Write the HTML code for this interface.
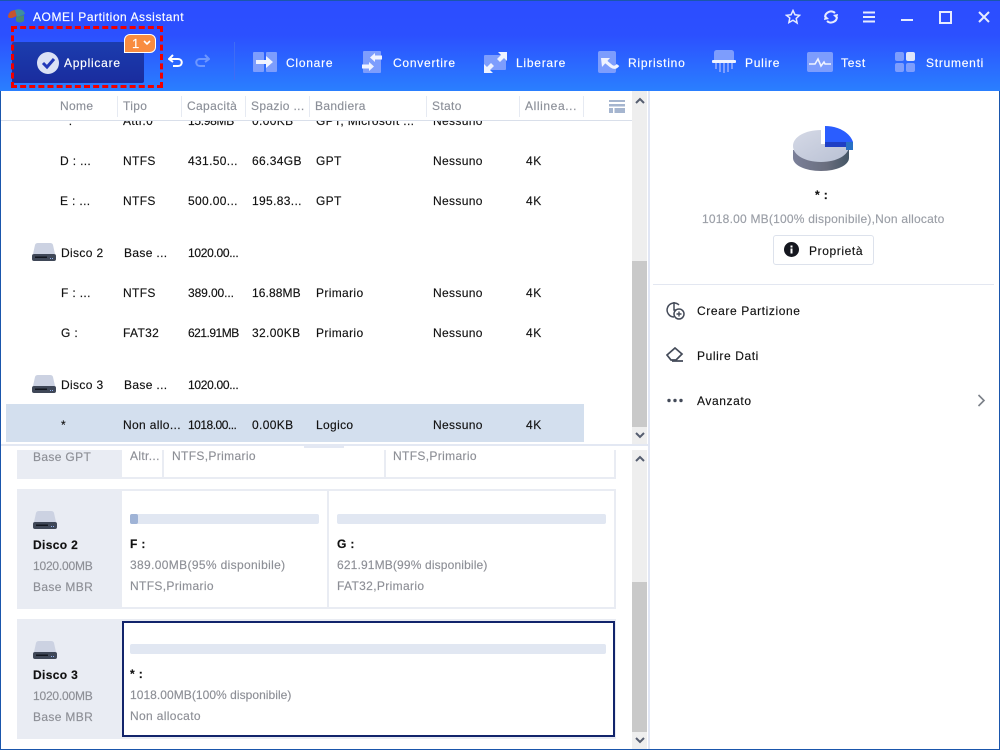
<!DOCTYPE html>
<html><head><meta charset="utf-8"><style>
html,body{margin:0;padding:0;background:#fff}
#r{position:relative;width:1000px;height:750px;overflow:hidden;background:#fff;font:12px "Liberation Sans",sans-serif;color:#111}
#r div,#r svg{position:absolute}
.t{white-space:nowrap;line-height:16px;height:16px;letter-spacing:.35px;-webkit-text-stroke:.15px currentColor}
.w{color:#fff;letter-spacing:.75px}
.h{color:#8b8f98;top:98px}
.g{color:#8d8f96}
.n{letter-spacing:-.3px}
.p{letter-spacing:.6px}
.sep{width:1px;top:96px;height:21px;background:#e6eaf2}
.b{font-weight:bold}
</style></head><body><div id="r">
<div style="left:0;top:0;width:1000px;height:91px;background:linear-gradient(#2c4dff 0,#2c50ff 35px,#2a7fff 91px)"></div>
<div style="left:0;top:0;width:1000px;height:1px;background:#1a56ac"></div>

<svg style="left:7px;top:8px" width="20" height="16" viewBox="0 0 20 16"><path d="M1 9C1 4 5 2 9 2l1 6-5 2H2z" fill="#c4552f"/><path d="M8 2c5-2 9 0 10 4l-8 3z" fill="#3f8f9f"/><path d="M9 9l8-2v6c-2 2-6 2-8 0z" fill="#4b8a72"/></svg>
<div class="t w" style="left:33px;top:9px;letter-spacing:.55px">AOMEI Partition Assistant</div>

<div style="left:12px;top:42px;width:132px;height:41px;background:linear-gradient(#1b3dae,#1a2c9e);border-radius:2px"></div>
<div style="left:11px;top:26px;width:146px;height:56px;border:3px dashed #f00000"></div>
<svg style="left:37px;top:52px" width="22" height="22" viewBox="0 0 22 22"><circle cx="11" cy="11" r="11" fill="#dbe1f5"/><path d="M6 11l4 4 7-8" fill="none" stroke="#2238b8" stroke-width="3"/></svg>
<div class="t w" style="left:64px;top:55px">Applicare</div>
<div style="left:124px;top:34px;width:32px;height:19px;background:#f98c40;border:1px solid #fff;border-radius:6px 6px 6px 0;box-sizing:border-box"></div>
<div class="t w" style="left:132px;top:36px;font-size:13px">1</div>
<svg style="left:143px;top:40px" width="8" height="6"><path d="M1 1l3 3 3-3" fill="none" stroke="#fff" stroke-width="1.600"/></svg>

<svg style="left:168px;top:54px" width="16" height="14"><path d="M5 1L1 5l4 3M1 5h9c5 0 5 7 0 7H5" fill="none" stroke="#fff" stroke-width="2"/></svg>
<svg style="left:194px;top:54px" width="16" height="14"><path d="M11 1l4 4-4 3M15 5H6c-5 0-5 7 0 7h5" fill="none" stroke="#6d97ff" stroke-width="2"/></svg>
<div style="left:234px;top:42px;width:1px;height:38px;background:#3f6cf5"></div>

<!-- toolbar -->
<svg style="left:253px;top:51px" width="24" height="22"><rect width="11" height="20" y="1" rx="1" fill="#7d9dfd"/><rect x="13" y="1" width="11" height="20" rx="1" fill="#7d9dfd"/><path d="M3 9h10V5l7 6-7 6v-4H3z" fill="#f0f3ff"/></svg>
<div class="t w" style="left:286px;top:55px">Clonare</div>
<svg style="left:362px;top:51px" width="22" height="22"><rect x="1" width="18" height="22" rx="1" fill="#7d9dfd"/><path d="M20 4.500h-7V2L8 6.500l5 4.500V8.500h7zM0 13.500h7V11l5 4.500L7 20v-2.500H0z" fill="#f0f3ff"/></svg>
<div class="t w" style="left:393px;top:55px">Convertire</div>
<svg style="left:484px;top:52px" width="23" height="21"><rect y="3" width="22" height="15" rx="1" fill="#7d9dfd"/><path d="M14 0h9v9l-3-3-4 4-3-3 4-4zM9 21H0v-9l3 3 4-4 3 3-4 4z" fill="#eef2ff"/></svg>
<div class="t w" style="left:516px;top:55px">Liberare</div>
<svg style="left:598px;top:51px" width="24" height="22"><rect width="18" height="22" rx="2" fill="#7d9dfd"/><path d="M3 7h9L4 16z" fill="#f0f3ff"/><path d="M7 10l6 5q4 3 7-1" fill="none" stroke="#f0f3ff" stroke-width="3.200"/></svg>
<div class="t w" style="left:628px;top:55px">Ripristino</div>
<svg style="left:712px;top:50px" width="24" height="24"><path d="M2 3c0-2 1-3 3-3h14c2 0 3 1 3 3v7H2z" fill="#7d9dfd"/><rect y="10" width="24" height="3" rx="1" fill="#f0f3ff"/><path d="M3 13h2v6H3zM7 13h2v9H7zM11 13h2v10h-2zM15 13h2v9h-2zM19 13h2v6h-2z" fill="#7d9dfd"/></svg>
<div class="t w" style="left:745px;top:55px">Pulire</div>
<svg style="left:807px;top:52px" width="26" height="20"><rect width="26" height="20" rx="2" fill="#7d9dfd"/><path d="M2 12h6l3-5 3 7 3-4 1 2h6" fill="none" stroke="#f0f3ff" stroke-width="1.600"/></svg>
<div class="t w" style="left:841px;top:55px">Test</div>
<svg style="left:895px;top:52px" width="20" height="20"><rect width="9" height="9" rx="2" fill="#7d9dfd"/><rect x="11" width="9" height="9" rx="2" fill="#dfe5fa"/><rect y="11" width="9" height="9" rx="2" fill="#7d9dfd"/><rect x="11" y="11" width="9" height="9" rx="2" fill="#7d9dfd"/></svg>
<div class="t w" style="left:926px;top:55px">Strumenti</div>

<!-- window buttons -->
<svg style="left:785px;top:9px" width="16" height="16"><path d="M8 1.500l2 4.300 4.600.5-3.400 3.100.9 4.600L8 11.200 3.900 13.500l.9-4.600L1.400 6.300 6 5.800z" fill="none" stroke="#e6ebff" stroke-width="1.500"/></svg>
<svg style="left:823px;top:9px" width="16" height="16"><path d="M2 8a6 6 0 0 1 10-4M14 8a6 6 0 0 1-10 4" fill="none" stroke="#e6ebff" stroke-width="2"/><path d="M10 6l5-1-1 5zM6 10l-5 1 1-5z" fill="#e6ebff"/></svg>
<svg style="left:863px;top:11px" width="12" height="12"><path d="M0 1.500h12M0 6h12M0 10.500h12" stroke="#e6ebff" stroke-width="2"/></svg>
<div style="left:901px;top:19px;width:12px;height:2px;background:#e6ebff"></div>
<div style="left:939px;top:11px;border:2px solid #e6ebff;width:9px;height:9px"></div>
<svg style="left:978px;top:11px" width="12" height="12"><path d="M1 1l10 10M11 1L1 11" stroke="#e6ebff" stroke-width="2"/></svg>

<!-- window border -->
<div style="left:0;top:91px;width:1px;height:659px;background:#1a56ac"></div>
<div style="left:999px;top:91px;width:1px;height:659px;background:#1a56ac"></div>
<div style="left:0;top:749px;width:1000px;height:1px;background:#1a56ac"></div>

<!-- table body, clipped -->
<div style="left:1px;top:121px;width:631px;height:323px;overflow:hidden">
 <div class="t" style="left:59px;top:-8px">*  :</div><div class="t" style="left:122px;top:-8px">Attr.0</div><div class="t n" style="left:187px;top:-8px">15.98MB</div><div class="t" style="left:251px;top:-8px">0.00KB</div><div class="t" style="left:315px;top:-8px">GPT, Microsoft ...</div><div class="t" style="left:432px;top:-8px">Nessuno</div>
</div>
<div class="t h" style="left:60px">Nome</div><div class="t h" style="left:123px">Tipo</div><div class="t h" style="left:187px">Capacità</div><div class="t h" style="left:251px">Spazio ...</div><div class="t h" style="left:315px">Bandiera</div><div class="t h" style="left:432px">Stato</div><div class="t h" style="left:525px;letter-spacing:.6px">Allinea...</div>
<div class="sep" style="left:117px"></div><div class="sep" style="left:181px"></div><div class="sep" style="left:245px"></div><div class="sep" style="left:309px"></div><div class="sep" style="left:426px"></div><div class="sep" style="left:519px"></div><div class="sep" style="left:583px"></div>
<div style="left:1px;top:120px;width:631px;height:1px;background:#d9dfea"></div>
<svg style="left:609px;top:100px" width="16" height="13"><path d="M0 0h16v2H0zM0 4h16v2.500H0zM0 8h4v5H0zM5.500 8H16v5H5.500z" fill="#a5b5cf"/></svg>

<div style="left:6px;top:404px;width:578px;height:38px;background:#d3dfee"></div>

<div class="t" style="left:60px;top:153px">D : ...</div><div class="t" style="left:123px;top:153px">NTFS</div><div class="t" style="left:188px;top:153px">431.50...</div><div class="t" style="left:252px;top:153px">66.34GB</div><div class="t" style="left:316px;top:153px">GPT</div><div class="t" style="left:433px;top:153px">Nessuno</div><div class="t p" style="left:526px;top:153px">4K</div>
<div class="t" style="left:60px;top:193px">E : ...</div><div class="t" style="left:123px;top:193px">NTFS</div><div class="t" style="left:188px;top:193px">500.00...</div><div class="t" style="left:252px;top:193px">195.83...</div><div class="t" style="left:316px;top:193px">GPT</div><div class="t" style="left:433px;top:193px">Nessuno</div><div class="t p" style="left:526px;top:193px">4K</div>

<svg style="left:32px;top:243px" width="24" height="18"><path d="M1 11L3 2Q3.500 0 6 0h12q2.500 0 3 2L23 11z" fill="#ccd2e2"/><path d="M0 13q0-2 2-2h20q2 0 2 2v3q0 2-2 2H2q-2 0-2-2z" fill="#3f4757"/><path d="M3 13.500h12v1.500H3z" fill="#12161f"/><path d="M18 15h1v1h-1zM20 15h1v1h-1z" fill="#8fb0ef"/></svg>
<div class="t" style="left:61px;top:245px">Disco 2</div><div class="t" style="left:124px;top:245px">Base ...</div><div class="t n" style="left:188px;top:245px">1020.00...</div>
<div class="t" style="left:61px;top:285px">F : ...</div><div class="t" style="left:123px;top:285px">NTFS</div><div class="t n" style="left:188px;top:285px;letter-spacing:-.1px">389.00...</div><div class="t" style="left:252px;top:285px;letter-spacing:.1px">16.88MB</div><div class="t" style="left:316px;top:285px">Primario</div><div class="t" style="left:433px;top:285px">Nessuno</div><div class="t p" style="left:526px;top:285px">4K</div>
<div class="t" style="left:61px;top:325px">G :</div><div class="t" style="left:123px;top:325px">FAT32</div><div class="t n" style="left:188px;top:325px;letter-spacing:-.5px">621.91MB</div><div class="t" style="left:252px;top:325px">32.00KB</div><div class="t" style="left:316px;top:325px">Primario</div><div class="t" style="left:433px;top:325px">Nessuno</div><div class="t p" style="left:526px;top:325px">4K</div>
<svg style="left:32px;top:375px" width="24" height="18"><path d="M1 11L3 2Q3.500 0 6 0h12q2.500 0 3 2L23 11z" fill="#ccd2e2"/><path d="M0 13q0-2 2-2h20q2 0 2 2v3q0 2-2 2H2q-2 0-2-2z" fill="#3f4757"/><path d="M3 13.500h12v1.500H3z" fill="#12161f"/><path d="M18 15h1v1h-1zM20 15h1v1h-1z" fill="#8fb0ef"/></svg>
<div class="t" style="left:61px;top:377px">Disco 3</div><div class="t" style="left:124px;top:377px">Base ...</div><div class="t n" style="left:188px;top:377px">1020.00...</div>
<div class="t" style="left:61px;top:417px">*</div><div class="t" style="left:123px;top:417px">Non allo...</div><div class="t n" style="left:188px;top:417px;letter-spacing:-.5px">1018.00...</div><div class="t" style="left:252px;top:417px">0.00KB</div><div class="t" style="left:316px;top:417px">Logico</div><div class="t" style="left:433px;top:417px">Nessuno</div><div class="t p" style="left:526px;top:417px">4K</div>

<!-- splitter -->
<div style="left:1px;top:444px;width:647px;height:2px;background:#e3e8f3"></div>
<div style="left:304px;top:446px;width:40px;height:2px;background:#e3e8f3"></div>

<!-- scrollbars -->
<div style="left:632px;top:91px;width:15px;height:353px;background:#eee"></div>
<div style="left:632px;top:261px;width:15px;height:166px;background:#c9c9c9"></div>
<svg style="left:635px;top:97px" width="10" height="7"><path d="M1 6l4-4 4 4" fill="none" stroke="#565e70" stroke-width="2"/></svg>
<svg style="left:635px;top:432px" width="10" height="7"><path d="M1 1l4 4 4-4" fill="none" stroke="#565e70" stroke-width="2"/></svg>
<div style="left:632px;top:450px;width:15px;height:299px;background:#eee"></div>
<div style="left:632px;top:582px;width:15px;height:150px;background:#c9c9c9"></div>
<svg style="left:635px;top:455px" width="10" height="7"><path d="M1 6l4-4 4 4" fill="none" stroke="#565e70" stroke-width="2"/></svg>
<svg style="left:635px;top:737px" width="10" height="7"><path d="M1 1l4 4 4-4" fill="none" stroke="#565e70" stroke-width="2"/></svg>
<div style="left:648px;top:91px;width:2px;height:658px;background:#e1e6f4"></div>

<!-- disk 1 clipped -->
<div style="left:17px;top:450px;width:105px;height:29px;background:#e9ecf3"></div>
<div style="left:122px;top:477px;width:494px;height:2px;background:#e9ecf3"></div>
<div style="left:162px;top:450px;width:2px;height:29px;background:#e9ecf3"></div>
<div style="left:384px;top:450px;width:2px;height:29px;background:#e9ecf3"></div>
<div style="left:614px;top:450px;width:2px;height:29px;background:#e9ecf3"></div>
<div class="t g" style="left:33px;top:449px">Base GPT</div><div class="t g" style="left:130px;top:448px">Altr...</div><div class="t g" style="left:172px;top:448px">NTFS,Primario</div><div class="t g" style="left:393px;top:448px">NTFS,Primario</div>

<!-- disk 2 -->
<div style="left:17px;top:489px;width:599px;height:120px;background:#e9ecf3"></div>
<div style="left:122px;top:491px;width:205px;height:116px;background:#fff"></div>
<div style="left:329px;top:491px;width:285px;height:116px;background:#fff"></div>
<svg style="left:33px;top:511px" width="24" height="18"><path d="M1 11L3 2Q3.500 0 6 0h12q2.500 0 3 2L23 11z" fill="#ccd2e2"/><path d="M0 13q0-2 2-2h20q2 0 2 2v3q0 2-2 2H2q-2 0-2-2z" fill="#3f4757"/><path d="M3 13.500h12v1.500H3z" fill="#12161f"/><path d="M18 15h1v1h-1zM20 15h1v1h-1z" fill="#8fb0ef"/></svg>
<div class="t b" style="left:33px;top:537px">Disco 2</div>
<div class="t g n" style="left:33px;top:558px;letter-spacing:-.2px">1020.00MB</div>
<div class="t g" style="left:33px;top:579px">Base MBR</div>
<div style="left:130px;top:514px;width:189px;height:10px;background:#e1e7f2;border-radius:2px"></div>
<div style="left:130px;top:514px;width:8px;height:10px;background:#9fb3d6;border-radius:2px"></div>
<div class="t b" style="left:130px;top:536px">F :</div>
<div class="t g" style="left:130px;top:557px">389.00MB(95% disponibile)</div>
<div class="t g" style="left:130px;top:578px">NTFS,Primario</div>
<div style="left:337px;top:514px;width:269px;height:10px;background:#e1e7f2;border-radius:2px"></div>
<div class="t b" style="left:337px;top:536px">G :</div>
<div class="t g" style="left:337px;top:557px;letter-spacing:.15px">621.91MB(99% disponibile)</div>
<div class="t g" style="left:337px;top:578px">FAT32,Primario</div>

<!-- disk 3 -->
<div style="left:17px;top:619px;width:599px;height:120px;background:#e9ecf3"></div>
<div style="left:122px;top:621px;width:489px;height:112px;background:#fff;border:2px solid #12246b"></div>
<svg style="left:33px;top:641px" width="24" height="18"><path d="M1 11L3 2Q3.500 0 6 0h12q2.500 0 3 2L23 11z" fill="#ccd2e2"/><path d="M0 13q0-2 2-2h20q2 0 2 2v3q0 2-2 2H2q-2 0-2-2z" fill="#3f4757"/><path d="M3 13.500h12v1.500H3z" fill="#12161f"/><path d="M18 15h1v1h-1zM20 15h1v1h-1z" fill="#8fb0ef"/></svg>
<div class="t b" style="left:33px;top:667px">Disco 3</div>
<div class="t g" style="left:33px;top:688px;letter-spacing:-.2px">1020.00MB</div>
<div class="t g" style="left:33px;top:709px">Base MBR</div>
<div style="left:130px;top:644px;width:476px;height:10px;background:#e1e7f2;border-radius:2px"></div>
<div class="t b" style="left:130px;top:666px">* :</div>
<div class="t g" style="left:130px;top:687px;letter-spacing:.05px">1018.00MB(100% disponibile)</div>
<div class="t g" style="left:130px;top:708px">Non allocato</div>

<!-- right panel -->
<svg style="left:790px;top:124px" width="66" height="50" viewBox="790 124 66 50">
<defs><linearGradient id="a" x1="0" y1="0" x2="1" y2="1"><stop offset="0" stop-color="#d5d9e6"/><stop offset="1" stop-color="#b9c1d4"/></linearGradient>
<linearGradient id="c" x1="0" x2="1"><stop offset="0" stop-color="#7b8099"/><stop offset=".6" stop-color="#6a6e7e"/><stop offset="1" stop-color="#445565"/></linearGradient></defs>
<path d="M793 150v8c0 7 12 13 28 13s28-6 28-13v-8z" fill="url(#c)"/>
<path d="M821 130c-16 0-28 7-28 16s12 16 28 16 28-7 28-16c0-.7 0-1.300-.2-2H821z" fill="url(#a)"/>
<path d="M825 126c14 0 25 7 28 16h-28z" fill="#2a5dff"/>
<path d="M825 142h21v5h-21z" fill="#1f3fc4"/><path d="M846 142h7v8h-7z" fill="#2870c4"/>
</svg>
<div class="t b" style="left:815px;top:187px">* :</div>
<div class="t g" style="left:702px;top:211px;color:#9a9ea6;letter-spacing:.22px">1018.00 MB(100% disponibile),Non allocato</div>
<div style="left:773px;top:235px;width:99px;height:28px;border:1px solid #dde2ec;border-radius:3px"></div>
<svg style="left:784px;top:242px" width="15" height="15"><circle cx="7.500" cy="7.500" r="7.500" fill="#15171f"/><path d="M6.500 6.500h2v5h-2zM6.500 3.500h2v2h-2z" fill="#fff"/></svg>
<div class="t p" style="left:809px;top:243px">Proprietà</div>
<div style="left:653px;top:284px;width:341px;height:1px;background:#e3e7f1"></div>

<svg style="left:666px;top:301px" width="20" height="20"><path d="M13 4a7 7 0 1 0-5 12" fill="none" stroke="#444b59" stroke-width="1.500"/><path d="M8 1v8h8" fill="none" stroke="#444b59" stroke-width="1.500"/><circle cx="13" cy="13" r="5" fill="#fff" stroke="#444b59" stroke-width="1.500"/><path d="M10.500 13h5M13 10.500v5" stroke="#444b59" stroke-width="1.400"/></svg>
<div class="t p" style="left:697px;top:303px">Creare Partizione</div>
<svg style="left:666px;top:347px" width="18" height="16"><path d="M1 8L9 1l7 6-6 6H5zM6 14h11" fill="none" stroke="#444b59" stroke-width="1.700"/></svg>
<div class="t p" style="left:697px;top:348px">Pulire Dati</div>
<svg style="left:667px;top:398px" width="16" height="5"><circle cx="2" cy="2.500" r="1.700" fill="#444b59"/><circle cx="8" cy="2.500" r="1.700" fill="#444b59"/><circle cx="14" cy="2.500" r="1.700" fill="#444b59"/></svg>
<div class="t p" style="left:697px;top:393px">Avanzato</div>
<svg style="left:977px;top:394px" width="9" height="13"><path d="M1.500 1l5.500 5.500L1.500 12" fill="none" stroke="#7b8088" stroke-width="1.600"/></svg>
</div></body></html>
